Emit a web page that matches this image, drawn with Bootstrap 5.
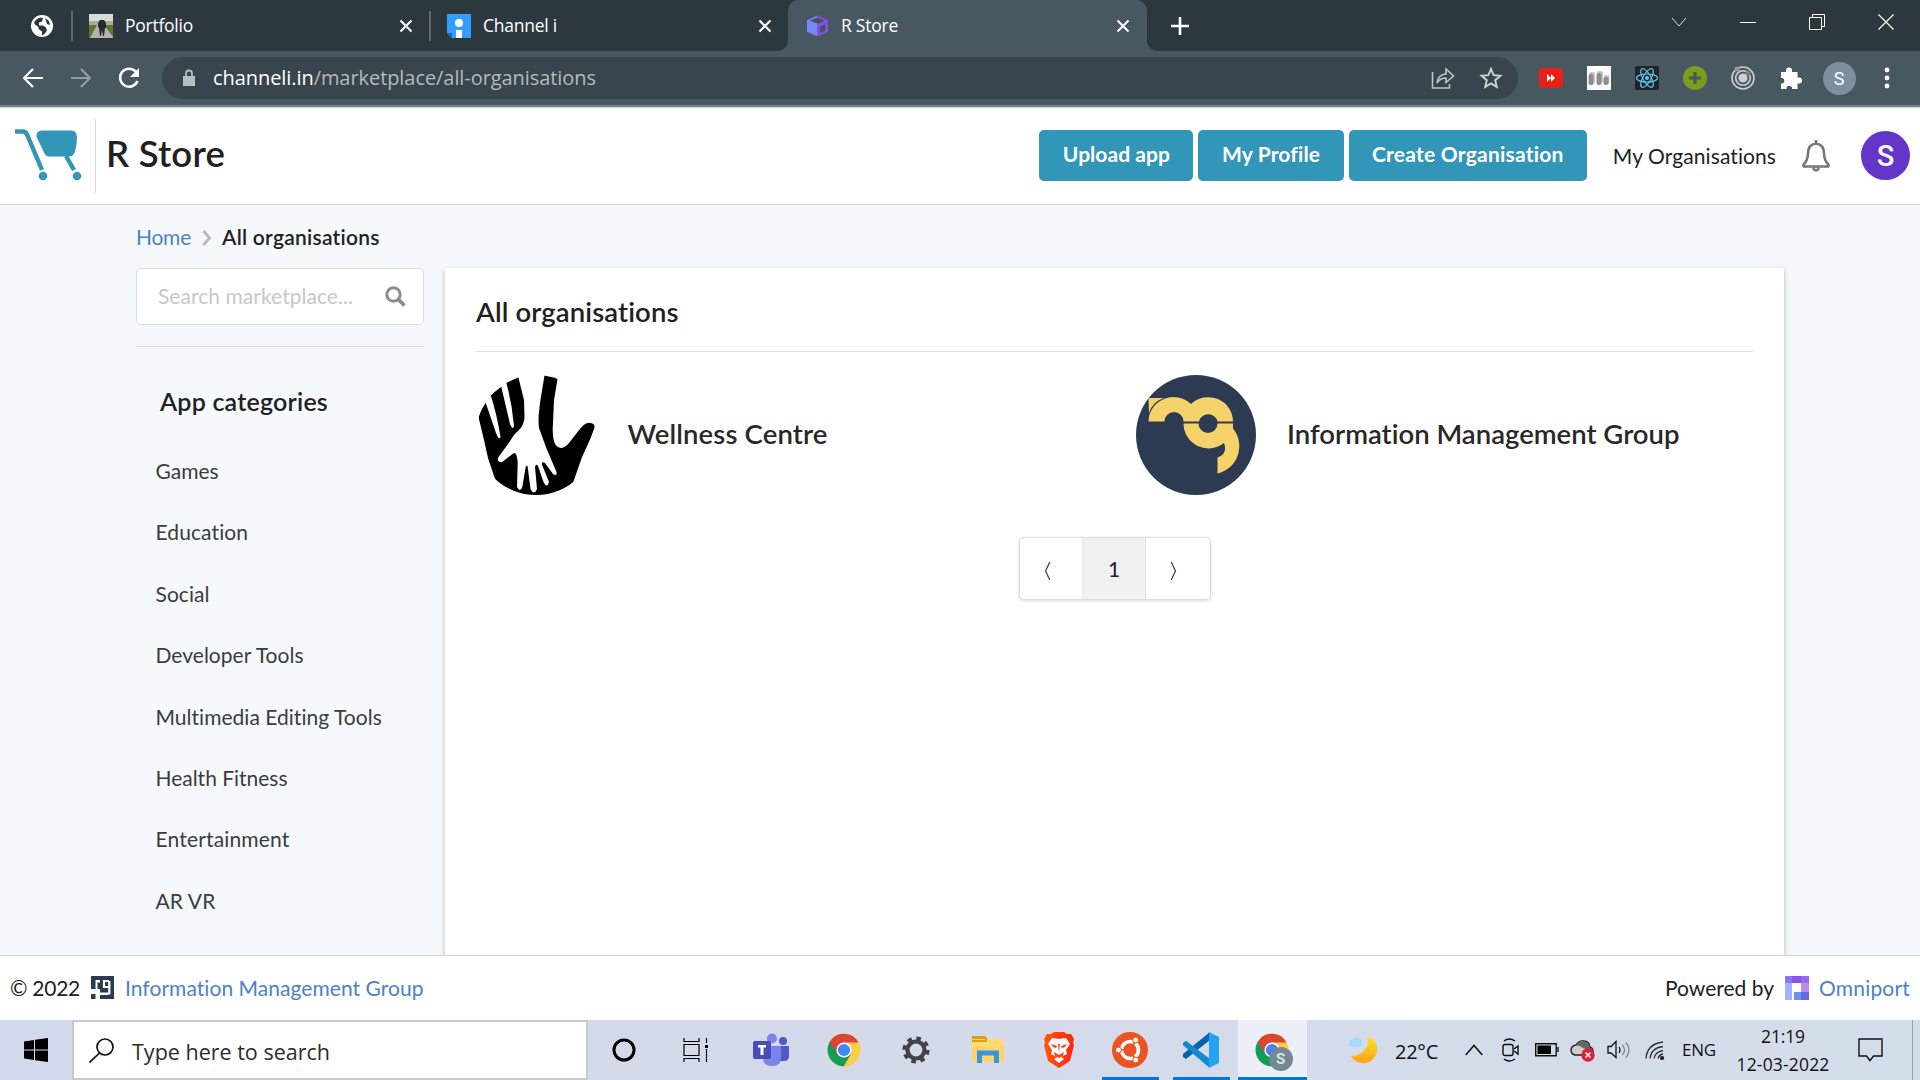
<!DOCTYPE html>
<html lang="en">
<head>
<meta charset="utf-8">
<title>R Store</title>
<link href="https://cdn.jsdelivr.net/npm/bootstrap@5.3.0/dist/css/bootstrap.min.css" rel="stylesheet">
<style>
html,body{height:1080px;overflow:hidden}
body{font-family:Lato,sans-serif;font-size:21px;color:#212121;background:#f5f9fc;line-height:1.2}
svg{display:block;flex:none}
.ui-font{font-family:"Open Sans","Noto Sans",sans-serif}
.fit{white-space:nowrap;display:inline-block;flex:none}
.semi{font-weight:600}
.tabstrip{height:51px;background:#2d383e;color:#fff;font-size:17.5px}
.tab{height:51px;flex:none;padding-left:17px}
.tab-name{flex:1;padding-left:12px}
.tab-sep{width:2px;height:30px;background:#5c686e;flex:none}
.tab-active{width:359px;background:#475860;border-radius:11px 11px 0 0;position:relative;padding-left:18px}
.tab-active::before,.tab-active::after{content:"";position:absolute;bottom:0;width:10px;height:10px}
.tab-active::before{left:-10px;background:radial-gradient(circle at 0 0,#2d383e 9.5px,#475860 10px)}
.tab-active::after{right:-10px;background:radial-gradient(circle at 100% 0,#2d383e 9.5px,#475860 10px)}
.toolbar{height:57px;background:#475860;border-bottom:1px solid #d0d3d8;box-shadow:inset 0 -2px #74818c;color:#fff;padding:0 0 2px 9px}
.slot{width:48px;flex:none;display:flex;justify-content:center;align-items:center}
.omni{width:1356px;height:42px;border-radius:21px;background:#39454c;padding:0 3px 0 20px;font-size:20px}
.appbar{height:97px;background:#fff;border-bottom:1px solid #d2d4d5;padding-bottom:1px}
.btn-store{background:#3296b9;color:#fff;font-weight:700;height:51px;border-radius:5px;font-size:21px;padding:0;line-height:46px;border:0}
.btn-store .fit{padding-bottom:3px}
.avatar{width:49px;height:49px;border-radius:50%;background:#6435c9;color:#fff;font:500 29px Roboto,sans-serif}
.workspace{height:750px;padding-left:136px;overflow:hidden}
.crumbs{height:63px}
.side{width:288px;flex:none}
.find{height:57px;border:1px solid #d9dbdd;border-radius:5px;background:#fff;padding:0 17px 0 21px;color:#c7c7c7}
.side-rule{height:1px;background:#d5d9dc;margin-top:21px}
.side h2{font-size:25px;font-weight:600;margin:40px 0 0 24px;height:30px;line-height:29px}
.cats{margin-top:23px}
.cats li{height:61.4px;line-height:61.4px;padding-left:19.500px;color:#3b3c3d}
.panel{width:1339px;height:690px;background:#fff;margin-left:21px;padding:0 31px 0 31px;box-shadow:0 2px 5px rgba(34,36,38,.3)}
.panel h1{font-size:27.5px;font-weight:600;margin:0;height:83px;line-height:88px}
.panel-rule{height:1px;background:#dedfdf;margin-bottom:23px}
.org{height:120px;font-size:27.5px;font-weight:600;color:#282828}
.org .fit{margin-bottom:4px}
.pager{width:192px;height:63px;border:1px solid #dcddde;border-radius:5px;box-shadow:0 1px 3px rgba(34,36,38,.17);margin:42px auto 0 543px}
.pager span{width:63px;padding-top:4px;text-align:center}
.pager .on{background:#f1f1f1;border-right:1px solid #e2e2e2;border-left:1px solid #e8e8e8;padding:0;width:64px;margin-left:-1px}
.foot{height:65px;background:#fff;border-top:1px solid #d2d4d5;padding:0 10px}
.lnk{color:#4b82c6}
.taskbar{height:60px;background:linear-gradient(90deg,#d2d9ea,#d5daea 50%,#d4ddea);color:#111}
.start{width:72px;padding-left:24px;flex:none}
.tb-find{width:516px;height:60px;background:#fff;border:2px solid #c9c9c9;padding-left:15px;font-size:21.5px;flex:none;color:#2b2b2b}
.app{height:60px;flex:none;display:flex;align-items:center;justify-content:center}
.run{box-shadow:inset 0 -3px #0078d7}
.lit{background:#eceff7}
.tray{font-size:18px}
</style>
<script src="https://cdn.jsdelivr.net/npm/bootstrap@5.3.0/dist/js/bootstrap.bundle.min.js"></script>
</head>
<body>
<svg width="0" height="0" class="position-absolute"><defs>
<symbol id="x" viewBox="0 0 14 14"><path d="M1.500 1.500l11 11m0-11l-11 11" stroke="#fff" stroke-width="2.100" fill="none"/></symbol>
<symbol id="chrome" viewBox="0 0 34 34"><circle cx="17" cy="17" r="16.500" fill="#ffce44"/><path d="M2.700 8.800A16.500 16.500 0 0 0 16.500 33.500L24 21 17 17z" fill="#0f9d58"/><path d="M2.700 8.800A16.500 16.500 0 0 1 31.500 9.500H17L10 21z" fill="#db4437"/><circle cx="17" cy="17" r="7.600" fill="#fff"/><circle cx="17" cy="17" r="6.100" fill="#4285f4"/></symbol>
</defs></svg>

<div class="tabstrip d-flex align-items-center ui-font">
  <svg width="22" height="22" viewBox="0 0 22 22" style="margin:0 18px 0 31px"><circle cx="11" cy="11" r="11" fill="#fff"/><path d="M3 8q2-5 7-5.500l2 1-1 3-3 1v3h4l3 2 1 3-3 4-2 1v-4l-3-2-1-3-2-1zM14 3l4 3 1 4-3-1z" fill="#2d383e"/></svg>
  <i class="tab-sep"></i>
  <div class="tab d-flex align-items-center" style="width:356px;padding-left:16px">
    <svg width="24" height="24" viewBox="0 0 24 24"><path fill="#dadcdc" d="M0 0h24v24H0z"/><path fill="#b3a892" d="M0 7h24v5H0z"/><path fill="#5c7836" d="M0 11h24v13H0z"/><path fill="#b8b3aa" d="M8 11h7l9 12v1H1z"/><path fill="#252a35" d="M11 6h4l2 3v5h-1l-1 8h-1l-1-6-1 6h-1l-1-8-1-1V9z"/></svg>
    <span class="tab-name"><span class="fit" data-w="68">Portfolio</span></span><svg width="14" height="14" style="margin-right:16px"><use href="#x"/></svg>
  </div>
  <i class="tab-sep"></i>
  <div class="tab d-flex align-items-center" style="width:357px;padding-left:16px">
    <svg width="24" height="24" viewBox="0 0 24 24"><path fill="#359dff" d="M0 0h24v24H5l-5-5z"/><path fill="#1765d2" d="M0 19h5v5z"/><circle cx="12" cy="9" r="4" fill="#fff"/><path fill="#fff" d="M9 16h6v8H9z"/></svg>
    <span class="tab-name"><span class="fit" data-w="74">Channel i</span></span><svg width="14" height="14" style="margin-right:16px"><use href="#x"/></svg>
  </div>
  <div class="tab tab-active d-flex align-items-center">
    <svg width="23" height="24" viewBox="0 0 24 24"><path fill="#7986f5" d="M1 6l11-5v22L1 18z"/><path fill="#8151e8" d="M12 1l11 5v12l-11 5z"/><path fill="#46525b" d="M4 6.500l8-3.300 8 3.300L12 9.500zM14.500 12.500L20 10v7l-5.500 2.500z"/></svg>
    <span class="tab-name"><span class="fit" data-w="57">R Store</span></span><svg width="14" height="14" style="margin-right:17px"><use href="#x"/></svg>
  </div>
  <svg width="18" height="18" viewBox="0 0 18 18" style="margin-left:24px"><path d="M9 0v18M0 9h18" stroke="#fff" stroke-width="2.600"/></svg>
  <div class="d-flex ms-auto" style="gap:53px;margin-right:26px;margin-bottom:8px">
    <svg width="16" height="16"><path d="M1 4l7 8 7-8" stroke="#dfe1e2" fill="none"/></svg>
    <svg width="16" height="16"><path d="M0 8.500h16" stroke="#fff"/></svg>
    <svg width="16" height="16"><path d="M.500 3.500h12v12H.500zM3.500 3V.500h12v12H13" stroke="#fff" fill="none"/></svg>
    <svg width="16" height="16"><path d="M.500.500l15 15m0-15l-15 15" stroke="#fff" stroke-width="1.200"/></svg>
  </div>
</div>

<div class="toolbar d-flex align-items-center ui-font">
  <div class="slot"><svg width="20" height="20"><path d="M20 10H2M10 1l-9 9 9 9" stroke="#fff" stroke-width="2.200" fill="none"/></svg></div>
  <div class="slot"><svg width="20" height="20"><path d="M0 10h18M10 1l9 9-9 9" stroke="#919ba1" stroke-width="2.200" fill="none"/></svg></div>
  <div class="slot"><svg width="22" height="22"><path d="M18.500 5.500A9 9 0 1 0 19.500 14" stroke="#fff" stroke-width="2.500" fill="none"/><path d="M21 1v9h-9z" fill="#fff"/></svg></div>
  <div class="omni d-flex align-items-center" style="margin-left:9px">
    <svg width="14" height="18" viewBox="0 0 14 18"><path d="M1 7h12v10H1z" fill="#b9bec1"/><path d="M4 8V4.500a3 3 0 0 1 6 0V8" stroke="#b9bec1" stroke-width="1.800" fill="none"/></svg>
    <span class="fit" data-w="383" style="color:#b4babd;margin-left:17px"><span class="text-white">channeli.in</span>/marketplace/all-organisations</span>
    <div class="slot ms-auto"><svg width="24" height="24" fill="none" stroke="#bfc4c6" stroke-width="1.600"><path d="M1.500 6v16h17v-4M6 17q1-8.500 9-9V3l7.500 7-7.500 6.500V12q-6 0-9 5z"/></svg></div>
    <div class="slot"><svg width="24" height="24"><path d="M12 3l2.600 6.200 6.800.6-5.200 4.400 1.600 6.700-5.800-3.500-5.800 3.500 1.600-6.700-5.200-4.400 6.800-.6z" stroke="#cfd2d4" stroke-width="1.900" fill="none"/></svg></div>
  </div>
  <div class="d-flex" style="margin-left:9px">
    <div class="slot"><svg width="24" height="20"><rect width="24" height="20" rx="3" fill="#e62117"/><path d="M8 6l4 4-4 4zM12 6l4 4-4 4z" fill="#fff"/></svg></div>
    <div class="slot"><svg width="24" height="24"><path fill="#fff" d="M0 0h24v24H0z"/><g fill="#c4c4c4"><rect x="2" y="6" width="6" height="12" rx="2"/><rect x="10" y="5" width="6" height="12" rx="2"/><rect x="17" y="9" width="5.500" height="9" rx="2"/></g><g fill="#8d8d8d"><rect x="1.500" y="8" width="5" height="11" rx="2"/><rect x="9.500" y="7" width="5" height="12" rx="2"/><rect x="16.500" y="11" width="5" height="8" rx="2"/></g></svg></div>
    <div class="slot"><svg width="24" height="24"><rect width="24" height="24" rx="2" fill="#20232a"/><g fill="none" stroke="#61c7ed" stroke-width="1.200"><ellipse cx="12" cy="12" rx="10.500" ry="4"/><ellipse cx="12" cy="12" rx="10.500" ry="4" transform="rotate(60 12 12)"/><ellipse cx="12" cy="12" rx="10.500" ry="4" transform="rotate(120 12 12)"/></g><circle cx="12" cy="12" r="2" fill="#61c7ed"/></svg></div>
    <div class="slot"><svg width="24" height="24"><circle cx="12" cy="12" r="12" fill="#7a9e1c"/><path d="M12 6v12M6 12h12" stroke="#475860" stroke-width="3.200"/></svg></div>
    <div class="slot"><svg width="24" height="24" fill="none" stroke="#ccd0d2" stroke-width="1.600"><circle cx="12" cy="12" r="11"/><circle cx="12" cy="12" r="7.300"/><circle cx="12" cy="12" r="3.800" fill="#ccd0d2"/><circle cx="6" cy="3" r="2.500" fill="#9b9896" stroke="none"/><circle cx="17" cy="7" r="2.500" fill="#897f7e" stroke="none"/></svg></div>
    <div class="slot"><svg width="22" height="22"><path d="M1 5h5V3.500a3 3 0 0 1 6 0V5h5.500v5.500H19a3 3 0 0 1 0 6h-1.500V22H12v-1.500a3 3 0 0 0-5.500 0V22H1v-5.500h1.500a3 3 0 0 0 0-5.500H1z" fill="#fff"/></svg></div>
    <div class="slot"><div class="rounded-circle d-flex align-items-center justify-content-center" style="width:33px;height:33px;background:#7b919e;font:18px Roboto">S</div></div>
    <div class="slot"><svg width="6" height="22" fill="#fff"><circle cx="3" cy="3" r="2.400"/><circle cx="3" cy="11" r="2.400"/><circle cx="3" cy="19" r="2.400"/></svg></div>
  </div>
</div>

<header class="appbar d-flex align-items-center">
  <svg width="68" height="54" viewBox="0 0 68 54" style="margin:0 12px 2px 15px"><g fill="#3296b9"><path d="M27 2.500h29q6 0 6 7-.5 12-3.500 17-1.500 2-4 2H34q-3 0-4.500-3Q23 12 21.500 8.500 21 3 27 2.500z"/><circle cx="28" cy="48" r="4.300"/><circle cx="62" cy="48" r="4.300"/></g><path d="M0 3.500h8q3 0 4.500 4L27 42M51 28l8 14" fill="none" stroke="#3296b9" stroke-width="4.500"/></svg>
  <i style="width:1px;height:74px;background:#d5d5d6"></i>
  <span class="fit semi" data-w="119" style="font-size:36.500px;margin:0 0 3px 10px">R Store</span>
  <div class="d-flex ms-auto" style="gap:5px;margin-bottom:1px">
    <button class="btn btn-store" style="width:154px"><span class="fit" data-w="107">Upload app</span></button>
    <button class="btn btn-store" style="width:145.500px"><span class="fit" data-w="98">My Profile</span></button>
    <button class="btn btn-store" style="width:238px"><span class="fit" data-w="192">Create Organisation</span></button>
  </div>
  <span class="fit" data-w="163.500" style="margin:1px 0 0 26px">My Organisations</span>
  <svg width="30" height="34" viewBox="0 0 30 34" style="margin:0 30px 0 25px"><path d="M15 4.500q-8 1-8 10-.3 7-4 10.500-1.500 2.500.5 2.500h23q2 0 .5-2.500-3.700-3.500-4-10.500 0-9-8-10zM12 29q3 5 6 0M15 1v4" stroke="#767676" stroke-width="2.600" fill="none"/></svg>
  <div class="avatar d-flex align-items-center justify-content-center" style="margin-right:10px">S</div>
</header>

<main class="workspace">
  <nav class="crumbs d-flex align-items-center">
    <span class="fit lnk" data-w="55">Home</span>
    <svg width="10" height="16" style="margin:2px 10px 0 11px"><path d="M1.500 1l6 7-6 7" stroke="#b7b9bb" stroke-width="2.800" fill="none"/></svg>
    <span class="fit semi" data-w="158">All organisations</span>
  </nav>
  <div class="d-flex">
    <aside class="side">
      <div class="find d-flex align-items-center justify-content-between"><span class="fit" data-w="195" style="margin-bottom:2px">Search marketplace...</span>
        <svg width="21" height="21" fill="none" stroke="#8c8c8c"><circle cx="8.500" cy="8.500" r="6.700" stroke-width="3"/><path d="M13.500 13.500l6 6" stroke-width="3.800"/></svg></div>
      <div class="side-rule"></div>
      <h2><span class="fit" data-w="168">App categories</span></h2>
      <ul class="cats list-unstyled">
        <li><span class="fit" data-w="63">Games</span></li><li><span class="fit" data-w="93">Education</span></li><li><span class="fit" data-w="54">Social</span></li><li><span class="fit" data-w="148">Developer Tools</span></li><li><span class="fit" data-w="227">Multimedia Editing Tools</span></li><li><span class="fit" data-w="132">Health Fitness</span></li><li><span class="fit" data-w="134">Entertainment</span></li><li><span class="fit" data-w="60">AR VR</span></li>
      </ul>
    </aside>
    <section class="panel">
      <h1><span class="fit" data-w="203">All organisations</span></h1>
      <div class="panel-rule"></div>
      <div class="d-flex">
        <div class="org d-flex align-items-center" style="width:660px">
          <svg width="120" height="120" viewBox="0 0 120 120"><defs><clipPath id="disc"><circle cx="60" cy="60" r="60"/></clipPath></defs><path clip-path="url(#disc)" d="M2 40L9.700 27.700 20 58Q23 66 24.500 62 21 40 14.700 20L25.300 11.700 34 49Q37 56 38 51 36 28 30.300 7.700L42.300 2 48 25 48.500 42Q48 49 44.700 53L38 60 31.300 70 22.500 82Q20 87 25.700 87.300 30 84 38 78 41 77 41.700 88L41 112Q44 118 46.300 112L49.700 92Q51 89 51.700 92L54.500 114Q58 121 61 114L59 92Q60 88 62 91L67.500 107Q71 114 73 107L65.700 89Q66 86 69 88L77 99Q81 102 80.500 97L70.300 73 63 53Q62 45 63 37L64 28 68.700-1 81.700 3 78 25 76.700 55Q77 66 79.700 70 85 77 93 68L104.700 53Q110 47 114.700 48 120 49 118 54 115 63 106 82L98 105 92 120H24L18.700 103 12 83 8 65z"/></svg>
          <span class="fit" data-w="200" style="margin-left:31.500px">Wellness Centre</span>
        </div>
        <div class="org d-flex align-items-center">
          <svg width="120" height="120" viewBox="0 0 120 120"><circle cx="60" cy="60" r="60" fill="#2c3a52"/><g fill="#f5d26a"><path d="M12.500 23h15Q16 27.500 13 38z"/><path d="M12.500 46.500A25 24.500 0 0 1 55 29 24.800 24.500 0 0 1 97 46.500H81.500a9.500 9.500 0 0 0-18.500 0H47.500a9.500 9.500 0 0 0-19 0z"/><path d="M47.500 48.500H62.500a9.500 9.500 0 0 0 19 0H97V53.500A28 28 0 0 1 81.500 98.500V82.500Q92 79 88 68A25 25 0 0 1 47.500 48.500z"/></g></svg>
          <span class="fit" data-w="393" style="margin-left:31px">Information Management Group</span>
        </div>
      </div>
      <div class="pager d-flex align-items-center"><span><svg width="7" height="20" style="margin-left:24px"><path d="M5.800 1L1.500 10l4.300 9" stroke="#3a3a3a" stroke-width="1.200" fill="none"/></svg></span><span class="on h-100 d-flex align-items-center justify-content-center">1</span><span><svg width="7" height="20" style="margin-left:24px"><path d="M1.200 1l4.300 9-4.300 9" stroke="#3a3a3a" stroke-width="1.200" fill="none"/></svg></span></div>
    </section>
  </div>
</main>

<footer class="foot d-flex align-items-center">
  <span class="fit" data-w="70">© 2022</span>
  <svg width="23" height="23" viewBox="0 0 23 23" style="margin:0 11px 2px"><path fill="#2c3a52" d="M0 0h23v23H9v-4h8v-2H9V4H4.500v9H0zM0 18h4.500v5H0z"/><path fill="#2c3a52" d="M6.500 6.500H9V13H6.500z"/><path d="M18.300 5v12.500H9M18 5h-5v6h5" fill="none" stroke="#fff" stroke-width="2.200"/></svg>
  <span class="fit lnk" data-w="299">Information Management Group</span>
  <span class="fit ms-auto" data-w="109">Powered by</span>
  <svg width="24" height="24" viewBox="0 0 24 24" style="margin:0 10px 0 11px"><path fill="#9370f5" d="M0 0h7v7H0z"/><path fill="#8753ea" d="M7 0h9v7H7z"/><path fill="#9b66ef" d="M16 0h8v7h-8z"/><path fill="#a3b2ff" d="M0 7h7v17H0z"/><path fill="#b98de6" d="M16 7h8v9h-8z"/><path fill="#7291ee" d="M9 16h7v8H9z"/><path fill="#626be2" d="M16 16h8v8h-8z"/></svg>
  <span class="fit lnk" data-w="91">Omniport</span>
</footer>

<div class="taskbar d-flex align-items-center ui-font">
  <div class="start"><svg width="24" height="24"><path d="M0 3.500l10-1.500v9.500H0zM11 1.800L24 0v11.500H11zM0 12.500h10V22L0 20.500zM11 12.500h13V24l-13-1.800z"/></svg></div>
  <div class="tb-find d-flex align-items-center"><svg width="25" height="25" fill="none" stroke="#111" stroke-width="1.700"><circle cx="16" cy="9" r="8"/><path d="M10.500 15L.500 24.500"/></svg><span class="fit" data-w="198" style="margin:4px 0 0 18px">Type here to search</span></div>
  <div class="app" style="width:72px"><svg width="24" height="24"><circle cx="12" cy="12" r="10" fill="none" stroke="#000" stroke-width="3"/></svg></div>
  <div class="app" style="width:71px"><svg width="25" height="24" fill="none" stroke="#000" stroke-width="1.200"><path d="M1 0v3.500h15V0M1 6.500h15v11H1zM1 24v-3.500h15V24M23.500 0v5M23.500 11v13"/><path fill="#000" d="M22 7h3v3h-3z" stroke="none"/></svg></div>
  <div class="app" style="width:80px"><svg width="36" height="34"><circle cx="30" cy="8" r="4" fill="#5059c9"/><path d="M24 13h12v10q0 5-5 5h-7z" fill="#5059c9"/><circle cx="19" cy="5.500" r="5" fill="#7b83eb"/><path d="M10 13h18v12q0 8-9 8t-9-8z" fill="#7b83eb"/><rect y="8" width="18" height="18" rx="2" fill="#464db4"/><path d="M5 12h8v2.500h-2.500V22h-3v-7.500H5z" fill="#fff"/></svg></div>
  <div class="app" style="width:66px"><svg width="34" height="34"><use href="#chrome"/></svg></div>
  <div class="app" style="width:77px"><svg width="28" height="28"><circle cx="14" cy="14" r="8.500" fill="none" stroke="#404347" stroke-width="4.200"/><circle cx="14" cy="14" r="11.800" fill="none" stroke="#404347" stroke-width="3.600" stroke-dasharray="4.600 4.670"/></svg></div>
  <div class="app" style="width:68px"><svg width="32" height="28"><path d="M0 0h13l2 2v4H0z" fill="#dfa00e"/><rect y="3" width="32" height="23" rx="1.500" fill="#ffd567"/><path d="M0 4h12l3-2v4H0z" fill="#dfa00e"/><path d="M0 6h14l3-3h15v8H0z" fill="#ffdb75"/><path d="M5 27V14.500h22V27h-5v-7.500H10V27z" fill="#3596df"/></svg></div>
  <div class="app" style="width:73px"><svg width="32" height="36" viewBox="0 0 32 36"><defs><linearGradient id="bv"><stop stop-color="#ff5a0a"/><stop offset="1" stop-color="#ff2410"/></linearGradient></defs><path d="M8 2l3-2h10l3 2 4 0 3 5-1 4 1 2-4 16-11 7-11-7L1 13l1-2-1-4 3-5z" fill="url(#bv)"/><path d="M9 6l7 1 7-1 4 6-4 6 1 4-6 3 3 2-5 4-5-4 3-2-6-3 1-4-4-6z" fill="#fff"/><path d="M8 12l6 2-1 2-3-1zM24 12l-6 2 1 2 3-1zM15 12l1 9 1-9zM11 20l5 3 5-3-1 4-4 2-4-2z" fill="#ff4012"/></svg></div>
  <div class="app run" style="width:57px;margin-left:7px"><svg width="36" height="36" style="margin-right:2px"><circle cx="18" cy="18" r="18" fill="#e95420"/><circle cx="18" cy="18" r="8.500" fill="none" stroke="#fff" stroke-width="3.600" stroke-dasharray="16 1.800" stroke-dashoffset="8"/><g fill="#fff" stroke="#e95420" stroke-width="1"><circle cx="6.500" cy="18" r="2.900"/><circle cx="23.700" cy="8" r="2.900"/><circle cx="23.700" cy="28" r="2.900"/></g></svg></div>
  <div class="app run" style="width:57px;margin-left:14px"><svg width="36" height="36" style="margin-right:2px"><path d="M0 11l3-2 24 19v8L0 13z" fill="#0879bf"/><path d="M0 25l3 2L27 8V0L0 22z" fill="#0066ad"/><path d="M0 13l3-4 24 18v9z" fill="#1389d1"/><path d="M26 0l10 5v26l-10 5z" fill="#24a3f2"/></svg></div>
  <div class="app run lit" style="width:69px;margin-left:8px"><div class="position-relative" style="margin-right:2px"><svg width="34" height="34"><use href="#chrome"/></svg><span class="position-absolute rounded-circle text-center" style="left:14px;top:14px;width:24px;height:24px;background:#748993;color:#dde3e6;font:bold 15px/24px Roboto">S</span></div></div>
  <div class="tray d-flex align-items-center flex-fill" style="padding-left:42px">
    <svg width="32" height="32"><defs><linearGradient id="mn" x2="0" y2="1"><stop stop-color="#ffe32e"/><stop offset="1" stop-color="#ffa312"/></linearGradient></defs><path d="M19 2A14 14 0 1 1 2 22Q12 22 17 14 20 8 19 2z" fill="url(#mn)"/><path d="M3 13a3.500 3.500 0 0 1 0-7q2-4 6-2 4 0 4 4 1 5-4 5z" fill="#a5daf6"/></svg>
    <span class="fit" data-w="43" style="font-size:20px;margin:3px 0 0 14px">22°C</span>
    <svg width="18" height="12" style="margin:0 0 0 27px"><path d="M.700 11L9 1.500l8.300 9.500" fill="none" stroke="#111" stroke-width="1.500"/></svg>
    <svg width="18" height="24" style="margin-left:19px" fill="none" stroke="#111" stroke-width="1.400"><rect x="1" y="6.500" width="10" height="11" rx="2"/><path d="M12 11l4-3v8l-4-3M2 3q5-4 11 0M2 21q5 4 11 0"/></svg>
    <svg width="24" height="14" style="margin-left:15px"><path d="M.700.700h20.500v12H.700zM23 4v5" fill="none" stroke="#111" stroke-width="1.400"/><path d="M2.500 2.500H16v8.500H2.500z"/></svg>
    <svg width="25" height="24" style="margin-left:11px"><path d="M5 17q-4-1-4-5t5-5q3-5 8-4 5 0 6 6 3 1 3 5l-3 3z" fill="#ccc" stroke="#222" stroke-width="1.400"/><path d="M6 7.500q3-5 8-4 5 1 6 6 3 1 2.500 4L13 10q-3-3-7-2.500z" fill="#666"/><circle cx="18" cy="17" r="6.700" fill="#dc2037"/><path d="M15.500 14.500l5 5m0-5l-5 5" stroke="#fff" stroke-width="1.500"/></svg>
    <svg width="24" height="20" style="margin-left:12px" fill="none" stroke="#111" stroke-width="1.300"><path d="M1 6.500h3L9 1.500v16L4 13H1zM12 7q2 3 0 6"/><path stroke="#888" d="M15.500 5q4 5 0 10M19 2.500q6 7.500 0 15"/></svg>
    <svg width="20" height="20" style="margin-left:14px" fill="none" stroke="#333" stroke-width="1.300"><path d="M1 18.500Q2 4 18 2M5 18.500Q6 8 18 6.500M9 18.500Q10 12 18 10.500M13 18.500q1-4 5-4.500"/><circle cx="17" cy="18" r="1.500" fill="#111"/></svg>
    <span class="fit" data-w="34" style="margin:1px 0 0 17px;font-size:17px">ENG</span>
    <div class="text-center d-flex flex-column align-items-center" style="width:94px;margin:0 0 1px 20px;font-size:17.500px;line-height:28px"><span class="fit" data-w="44">21:19</span><span class="fit" data-w="93">12-03-2022</span></div>
    <svg width="25" height="24" style="margin-left:28px"><path d="M1 1h23v17h-8.500l-3.500 4.500L8.500 18H1z" fill="none" stroke="#111" stroke-width="1.400"/></svg>
    <i class="ms-auto" style="width:1px;height:60px;background:#9aa2ae;margin-right:7px"></i>
  </div>
</div>
<script>
// Tracks each label so its run of text fills its allotted width.
document.fonts.ready.then(function(){document.querySelectorAll('.fit[data-w]').forEach(function(e){
  var w=e.getBoundingClientRect().width,n=e.textContent.length;
  e.style.letterSpacing=((e.dataset.w-w)/n).toFixed(3)+'px';
});});
</script>
</body>
</html>
